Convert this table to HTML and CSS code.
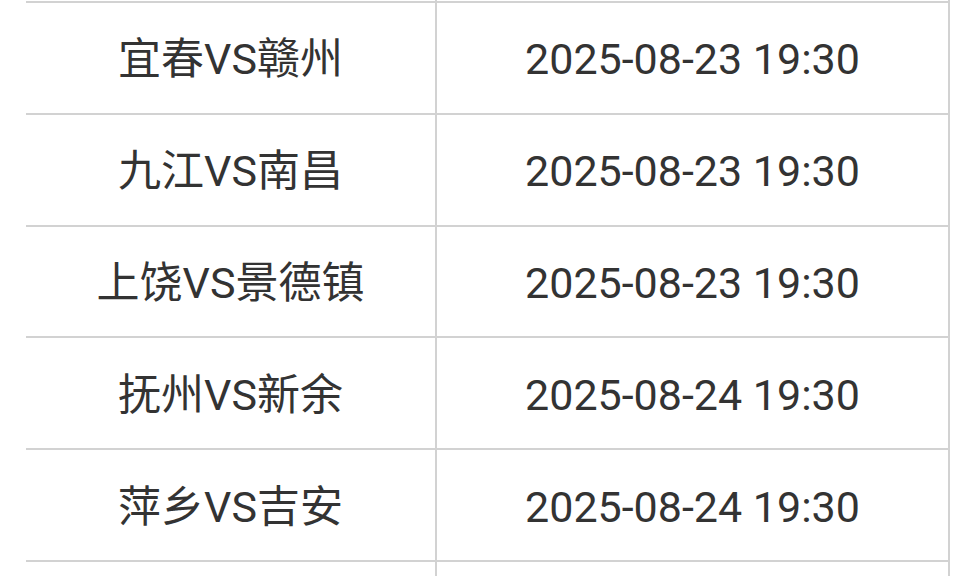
FILE: index.html
```html
<!DOCTYPE html>
<html lang="zh">
<head>
<meta charset="utf-8">
<link rel="stylesheet" href="styles.css">
</head>
<body>
<div class="table">
  <div class="row stub"><div class="cell"></div><div class="cell"></div></div>
  <div class="row"><div class="cell">宜春VS赣州</div><div class="cell">2025-08-23 19:30</div></div>
  <div class="row"><div class="cell">九江VS南昌</div><div class="cell">2025-08-23 19:30</div></div>
  <div class="row"><div class="cell">上饶VS景德镇</div><div class="cell">2025-08-23 19:30</div></div>
  <div class="row"><div class="cell">抚州VS新余</div><div class="cell">2025-08-24 19:30</div></div>
  <div class="row"><div class="cell">萍乡VS吉安</div><div class="cell">2025-08-24 19:30</div></div>
  <div class="row tail"><div class="cell"></div><div class="cell"></div></div>
</div>
</body>
</html>
```

FILE: styles.css
```css
html, body {
  margin: 0;
  padding: 0;
  background: #ffffff;
}
body {
  width: 960px;
  height: 577px;
  overflow: hidden;
  font-family: Roboto, "Noto Sans CJK SC", sans-serif;
  color: #333333;
}
.table {
  margin-left: 26px;
  width: 924px;
}
.row {
  box-sizing: border-box;
  display: grid;
  grid-template-columns: 411px 513px;
  height: 111.8px;
  border-bottom: 2px solid #d2d2d2;
}
.row.stub {
  height: 3px;
}
.row.tail {
  height: 14px;
  border-bottom: none;
}
.cell {
  display: flex;
  align-items: center;
  justify-content: center;
  padding-top: 4px;
  border-right: 2px solid #d2d2d2;
  font-size: 43px;
  line-height: 1;
}
.stub .cell,
.tail .cell {
  padding-top: 0;
}
```
